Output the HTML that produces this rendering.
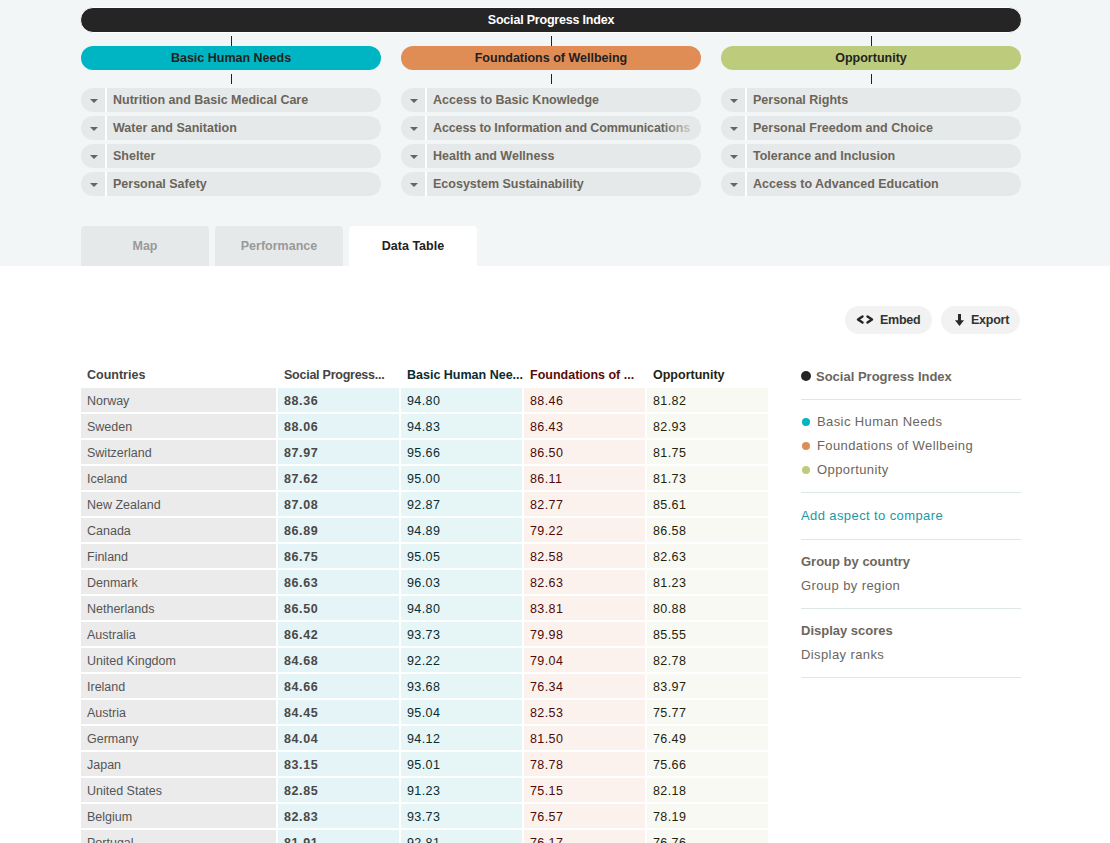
<!DOCTYPE html>
<html><head><meta charset="utf-8">
<style>
*{margin:0;padding:0;box-sizing:border-box}
html,body{width:1110px;height:843px;overflow:hidden;background:#fff;font-family:"Liberation Sans",sans-serif}
.top{position:absolute;left:0;top:0;width:1110px;height:266px;background:#f2f6f7}
.abs{position:absolute}
.bar{left:80px;top:7px;width:942px;height:26px;border:1px solid #fff;border-radius:13px;background:#252525;color:#fff;font-weight:bold;font-size:12.5px;letter-spacing:-0.2px;text-align:center;line-height:24px}
.vl{position:absolute;width:1px;background:#222}
.pill{position:absolute;top:46px;width:300px;height:24px;border-radius:12px;text-align:center;font-weight:bold;font-size:12.5px;line-height:24px;color:#222}
.sub{position:absolute;width:300px;height:24px;border-radius:12px;background:#e6e9ea;color:#6b6559;font-weight:bold;font-size:12.5px;line-height:24px;overflow:hidden;white-space:nowrap}
.sub .dd{position:absolute;left:0;top:0;width:26px;height:24px;border-right:2px solid #fff}
.sub .dd:after{content:"";position:absolute;left:9px;top:11px;border-left:4px solid transparent;border-right:4px solid transparent;border-top:4px solid #6b6559}
.sub .t{position:absolute;left:32px;top:0}
.tab{position:absolute;top:226px;width:128px;height:40px;border-radius:4px 4px 0 0;background:#e6e9ea;color:#999;font-weight:bold;font-size:12.5px;text-align:center;line-height:40px}
.tab.on{background:#fff;color:#222}
.btn{position:absolute;top:306px;height:28px;border-radius:14px;background:#f2f2f2;color:#333;font-weight:bold;font-size:12.5px;line-height:28px;letter-spacing:-0.25px}
.th{position:absolute;top:368px;font-weight:bold;font-size:12.5px;color:#444;line-height:14px;white-space:nowrap}
.h2{color:#0b2b30}.h3{color:#5a0c0a}.h4{color:#1f240c}
.r{position:absolute;left:81px;width:687px;height:24px}
.c{position:absolute;top:0;height:24px;font-size:12.5px;line-height:24px;white-space:nowrap}
.c span{position:absolute;left:6px;top:1px}
.c0{left:0;width:195px;background:#ebebeb;color:#555}
.c1{left:197px;width:121px;background:#e5f4f6;color:#4a4848;font-weight:bold;letter-spacing:0.6px}
.c2{left:320px;width:121px;background:#e6f6f7;color:#0b2b30;letter-spacing:0.4px}
.c3{left:443px;width:121px;background:#fbf2ee;color:#4e0a08;letter-spacing:0.4px}
.c4{left:566px;width:121px;background:#f8f9f3;color:#1f240c;letter-spacing:0.4px}
.sb{position:absolute;left:801px;width:220px;font-size:13px;color:#6b6660;white-space:nowrap;letter-spacing:0.4px}
.sb.b{letter-spacing:0}
.sep{position:absolute;left:801px;width:220px;height:1px;background:#dfe6e6}
.dot{position:absolute;border-radius:50%}
</style></head><body>
<div class="top"></div>
<div class="abs bar">Social Progress Index</div>
<div class="vl" style="left:231px;top:36px;height:10px"></div>
<div class="vl" style="left:551px;top:36px;height:10px"></div>
<div class="vl" style="left:871px;top:36px;height:10px"></div>
<div class="pill" style="left:81px;background:#00b5c3">Basic Human Needs</div>
<div class="pill" style="left:401px;background:#e08c55">Foundations of Wellbeing</div>
<div class="pill" style="left:721px;background:#bdcc7c">Opportunity</div>
<div class="vl" style="left:231px;top:74px;height:10px"></div>
<div class="vl" style="left:551px;top:74px;height:10px"></div>
<div class="vl" style="left:871px;top:74px;height:10px"></div>

<div class="sub" style="left:81px;top:88px"><div class="dd"></div><div class="t">Nutrition and Basic Medical Care</div></div>
<div class="sub" style="left:81px;top:116px"><div class="dd"></div><div class="t">Water and Sanitation</div></div>
<div class="sub" style="left:81px;top:144px"><div class="dd"></div><div class="t">Shelter</div></div>
<div class="sub" style="left:81px;top:172px"><div class="dd"></div><div class="t">Personal Safety</div></div>
<div class="sub" style="left:401px;top:88px"><div class="dd"></div><div class="t">Access to Basic Knowledge</div></div>
<div class="sub" style="left:401px;top:116px"><div class="dd"></div><div class="t" style="letter-spacing:-0.12px">Access to Information and Communications</div><div style="position:absolute;left:262px;top:0;width:40px;height:24px;background:linear-gradient(to right,rgba(230,233,234,0),rgba(230,233,234,0.9) 80%)"></div></div>
<div class="sub" style="left:401px;top:144px"><div class="dd"></div><div class="t">Health and Wellness</div></div>
<div class="sub" style="left:401px;top:172px"><div class="dd"></div><div class="t">Ecosystem Sustainability</div></div>
<div class="sub" style="left:721px;top:88px"><div class="dd"></div><div class="t">Personal Rights</div></div>
<div class="sub" style="left:721px;top:116px"><div class="dd"></div><div class="t">Personal Freedom and Choice</div></div>
<div class="sub" style="left:721px;top:144px"><div class="dd"></div><div class="t">Tolerance and Inclusion</div></div>
<div class="sub" style="left:721px;top:172px"><div class="dd"></div><div class="t">Access to Advanced Education</div></div>

<div class="tab" style="left:81px">Map</div>
<div class="tab" style="left:215px">Performance</div>
<div class="tab on" style="left:349px">Data Table</div>

<div class="btn" style="left:845px;width:87px"><svg class="abs" style="left:0;top:0" width="87" height="28"><g fill="none" stroke="#252525" stroke-width="2.4" stroke-linecap="round" stroke-linejoin="round"><polyline points="17.5,10.5 13,13.5 17.5,16.5"/><polyline points="22.5,10.5 27,13.5 22.5,16.5"/></g></svg><span class="abs" style="left:35px;top:0">Embed</span></div>
<div class="btn" style="left:941px;width:79px"><svg class="abs" style="left:0;top:0" width="79" height="28"><rect x="17" y="8" width="3" height="7" fill="#2a2a2a"/><polygon points="14,14.3 23,14.3 18.5,20" fill="#2a2a2a"/></svg><span class="abs" style="left:30px;top:0">Export</span></div>

<!--TABLE-->
<div class="tbl">
<div class="th" style="left:87px">Countries</div>
<div class="th" style="left:284px;letter-spacing:-0.25px">Social Progress...</div>
<div class="th h2" style="left:407px">Basic Human Nee...</div>
<div class="th h3" style="left:530px">Foundations of ...</div>
<div class="th h4" style="left:653px">Opportunity</div>
<div class="r" style="top:388px"><div class="c c0"><span>Norway</span></div><div class="c c1"><span>88.36</span></div><div class="c c2"><span>94.80</span></div><div class="c c3"><span>88.46</span></div><div class="c c4"><span>81.82</span></div></div>
<div class="r" style="top:414px"><div class="c c0"><span>Sweden</span></div><div class="c c1"><span>88.06</span></div><div class="c c2"><span>94.83</span></div><div class="c c3"><span>86.43</span></div><div class="c c4"><span>82.93</span></div></div>
<div class="r" style="top:440px"><div class="c c0"><span>Switzerland</span></div><div class="c c1"><span>87.97</span></div><div class="c c2"><span>95.66</span></div><div class="c c3"><span>86.50</span></div><div class="c c4"><span>81.75</span></div></div>
<div class="r" style="top:466px"><div class="c c0"><span>Iceland</span></div><div class="c c1"><span>87.62</span></div><div class="c c2"><span>95.00</span></div><div class="c c3"><span>86.11</span></div><div class="c c4"><span>81.73</span></div></div>
<div class="r" style="top:492px"><div class="c c0"><span>New Zealand</span></div><div class="c c1"><span>87.08</span></div><div class="c c2"><span>92.87</span></div><div class="c c3"><span>82.77</span></div><div class="c c4"><span>85.61</span></div></div>
<div class="r" style="top:518px"><div class="c c0"><span>Canada</span></div><div class="c c1"><span>86.89</span></div><div class="c c2"><span>94.89</span></div><div class="c c3"><span>79.22</span></div><div class="c c4"><span>86.58</span></div></div>
<div class="r" style="top:544px"><div class="c c0"><span>Finland</span></div><div class="c c1"><span>86.75</span></div><div class="c c2"><span>95.05</span></div><div class="c c3"><span>82.58</span></div><div class="c c4"><span>82.63</span></div></div>
<div class="r" style="top:570px"><div class="c c0"><span>Denmark</span></div><div class="c c1"><span>86.63</span></div><div class="c c2"><span>96.03</span></div><div class="c c3"><span>82.63</span></div><div class="c c4"><span>81.23</span></div></div>
<div class="r" style="top:596px"><div class="c c0"><span>Netherlands</span></div><div class="c c1"><span>86.50</span></div><div class="c c2"><span>94.80</span></div><div class="c c3"><span>83.81</span></div><div class="c c4"><span>80.88</span></div></div>
<div class="r" style="top:622px"><div class="c c0"><span>Australia</span></div><div class="c c1"><span>86.42</span></div><div class="c c2"><span>93.73</span></div><div class="c c3"><span>79.98</span></div><div class="c c4"><span>85.55</span></div></div>
<div class="r" style="top:648px"><div class="c c0"><span>United Kingdom</span></div><div class="c c1"><span>84.68</span></div><div class="c c2"><span>92.22</span></div><div class="c c3"><span>79.04</span></div><div class="c c4"><span>82.78</span></div></div>
<div class="r" style="top:674px"><div class="c c0"><span>Ireland</span></div><div class="c c1"><span>84.66</span></div><div class="c c2"><span>93.68</span></div><div class="c c3"><span>76.34</span></div><div class="c c4"><span>83.97</span></div></div>
<div class="r" style="top:700px"><div class="c c0"><span>Austria</span></div><div class="c c1"><span>84.45</span></div><div class="c c2"><span>95.04</span></div><div class="c c3"><span>82.53</span></div><div class="c c4"><span>75.77</span></div></div>
<div class="r" style="top:726px"><div class="c c0"><span>Germany</span></div><div class="c c1"><span>84.04</span></div><div class="c c2"><span>94.12</span></div><div class="c c3"><span>81.50</span></div><div class="c c4"><span>76.49</span></div></div>
<div class="r" style="top:752px"><div class="c c0"><span>Japan</span></div><div class="c c1"><span>83.15</span></div><div class="c c2"><span>95.01</span></div><div class="c c3"><span>78.78</span></div><div class="c c4"><span>75.66</span></div></div>
<div class="r" style="top:778px"><div class="c c0"><span>United States</span></div><div class="c c1"><span>82.85</span></div><div class="c c2"><span>91.23</span></div><div class="c c3"><span>75.15</span></div><div class="c c4"><span>82.18</span></div></div>
<div class="r" style="top:804px"><div class="c c0"><span>Belgium</span></div><div class="c c1"><span>82.83</span></div><div class="c c2"><span>93.73</span></div><div class="c c3"><span>76.57</span></div><div class="c c4"><span>78.19</span></div></div>
<div class="r" style="top:830px"><div class="c c0"><span>Portugal</span></div><div class="c c1"><span>81.91</span></div><div class="c c2"><span>92.81</span></div><div class="c c3"><span>76.17</span></div><div class="c c4"><span>76.76</span></div></div>
</div>
<!--/TABLE-->
<!--SIDEBAR-->
<div class="dot" style="left:801px;top:371px;width:10px;height:10px;background:#252525"></div>
<div class="sb b" style="left:816px;top:369px;font-weight:bold;line-height:16px">Social Progress Index</div>
<div class="sep" style="top:399px"></div>
<div class="dot" style="left:802px;top:418px;width:8px;height:8px;background:#00b5c3"></div>
<div class="sb" style="left:817px;top:414px;line-height:16px">Basic Human Needs</div>
<div class="dot" style="left:802px;top:442px;width:8px;height:8px;background:#e08c55"></div>
<div class="sb" style="left:817px;top:438px;line-height:16px">Foundations of Wellbeing</div>
<div class="dot" style="left:802px;top:466px;width:8px;height:8px;background:#bdcc7c"></div>
<div class="sb" style="left:817px;top:462px;line-height:16px">Opportunity</div>
<div class="sep" style="top:492px"></div>
<div class="sb" style="top:508px;line-height:16px;color:#1b98a3">Add aspect to compare</div>
<div class="sep" style="top:539px"></div>
<div class="sb b" style="top:554px;line-height:16px;font-weight:bold">Group by country</div>
<div class="sb" style="top:578px;line-height:16px">Group by region</div>
<div class="sep" style="top:608px"></div>
<div class="sb b" style="top:623px;line-height:16px;font-weight:bold">Display scores</div>
<div class="sb" style="top:647px;line-height:16px">Display ranks</div>
<div class="sep" style="top:677px"></div>
<!--/SIDEBAR-->
</body></html>
